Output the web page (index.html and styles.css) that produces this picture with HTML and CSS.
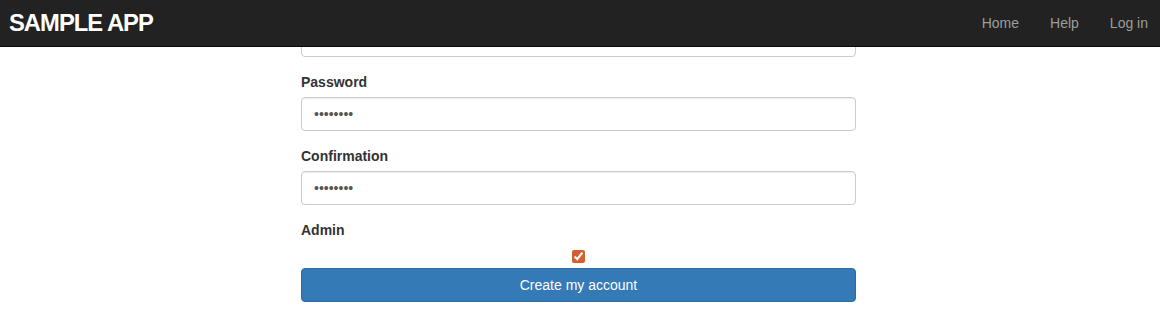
FILE: index.html
```html
<!DOCTYPE html>
<html lang="en">
<head>
  <meta charset="UTF-8" />
  <title>Sign up | Sample App</title>
  <link rel="stylesheet" href="styles.css">
</head>
<body>

  <header class="navbar">
    <a class="logo" href="#">SAMPLE APP</a>
    <nav class="nav-links">
      <a href="#">Home</a>
      <a href="#">Help</a>
      <a href="#">Log in</a>
    </nav>
  </header>

  <div class="container">
    <form class="signup-form">
      <div class="form-group">
        <input class="form-control" type="email" value="">
      </div>

      <div class="form-group">
        <label for="password">Password</label>
        <input class="form-control" type="password" id="password" value="foobarbz">
      </div>

      <div class="form-group">
        <label for="confirmation">Confirmation</label>
        <input class="form-control" type="password" id="confirmation" value="foobarbz">
      </div>

      <label for="admin">Admin</label>
      <input class="admin-check" type="checkbox" id="admin" checked>

      <button type="button" class="btn-primary">Create my account</button>
    </form>
  </div>

</body>
</html>
```

FILE: styles.css
```css
* { box-sizing: border-box; }
body {
  margin: 0;
  background: #fff;
  font-family: "Liberation Sans", Arial, sans-serif;
  font-size: 14px;
  line-height: 20px;
  color: #333;
}

/* Navbar */
.navbar {
  position: fixed;
  top: 0; left: 0; right: 0;
  height: 47px;
  background: #222;
  border-bottom: 1px solid #080808;
  display: flex;
  align-items: center;
  justify-content: space-between;
  padding: 0 12px 0 9px;
  z-index: 10;
}
.logo {
  color: #fff;
  font-size: 23.8px;
  font-weight: bold;
  letter-spacing: -1px;
  text-decoration: none;
  padding-bottom: 1px;
}
.nav-links {
  display: flex;
  gap: 31px;
}
.nav-links a {
  color: #9d9d9d;
  text-decoration: none;
}

/* Form */
.container {
  width: 555px;
  margin-left: calc(50% - 279px);
  padding-top: 23px;
}
.form-group {
  margin-bottom: 15px;
}
label {
  display: block;
  font-weight: bold;
  margin-bottom: 5px;
}
.form-control {
  display: block;
  width: 100%;
  height: 34px;
  padding: 6px 12px;
  font-family: inherit;
  font-size: 14px;
  color: #555;
  background: #fff;
  border: 1px solid #ccc;
  border-radius: 4px;
  box-shadow: inset 0 1px 1px rgba(0, 0, 0, 0.075);
}
.admin-check {
  display: block;
  width: 13px;
  height: 13px;
  margin: 10px auto 5px;
  accent-color: #d35f33;
}
.btn-primary {
  display: block;
  width: 100%;
  height: 34px;
  padding: 6px 12px;
  font-family: inherit;
  font-size: 14px;
  color: #fff;
  background: #337ab7;
  border: 1px solid #2e6da4;
  border-radius: 4px;
  cursor: pointer;
}
```
